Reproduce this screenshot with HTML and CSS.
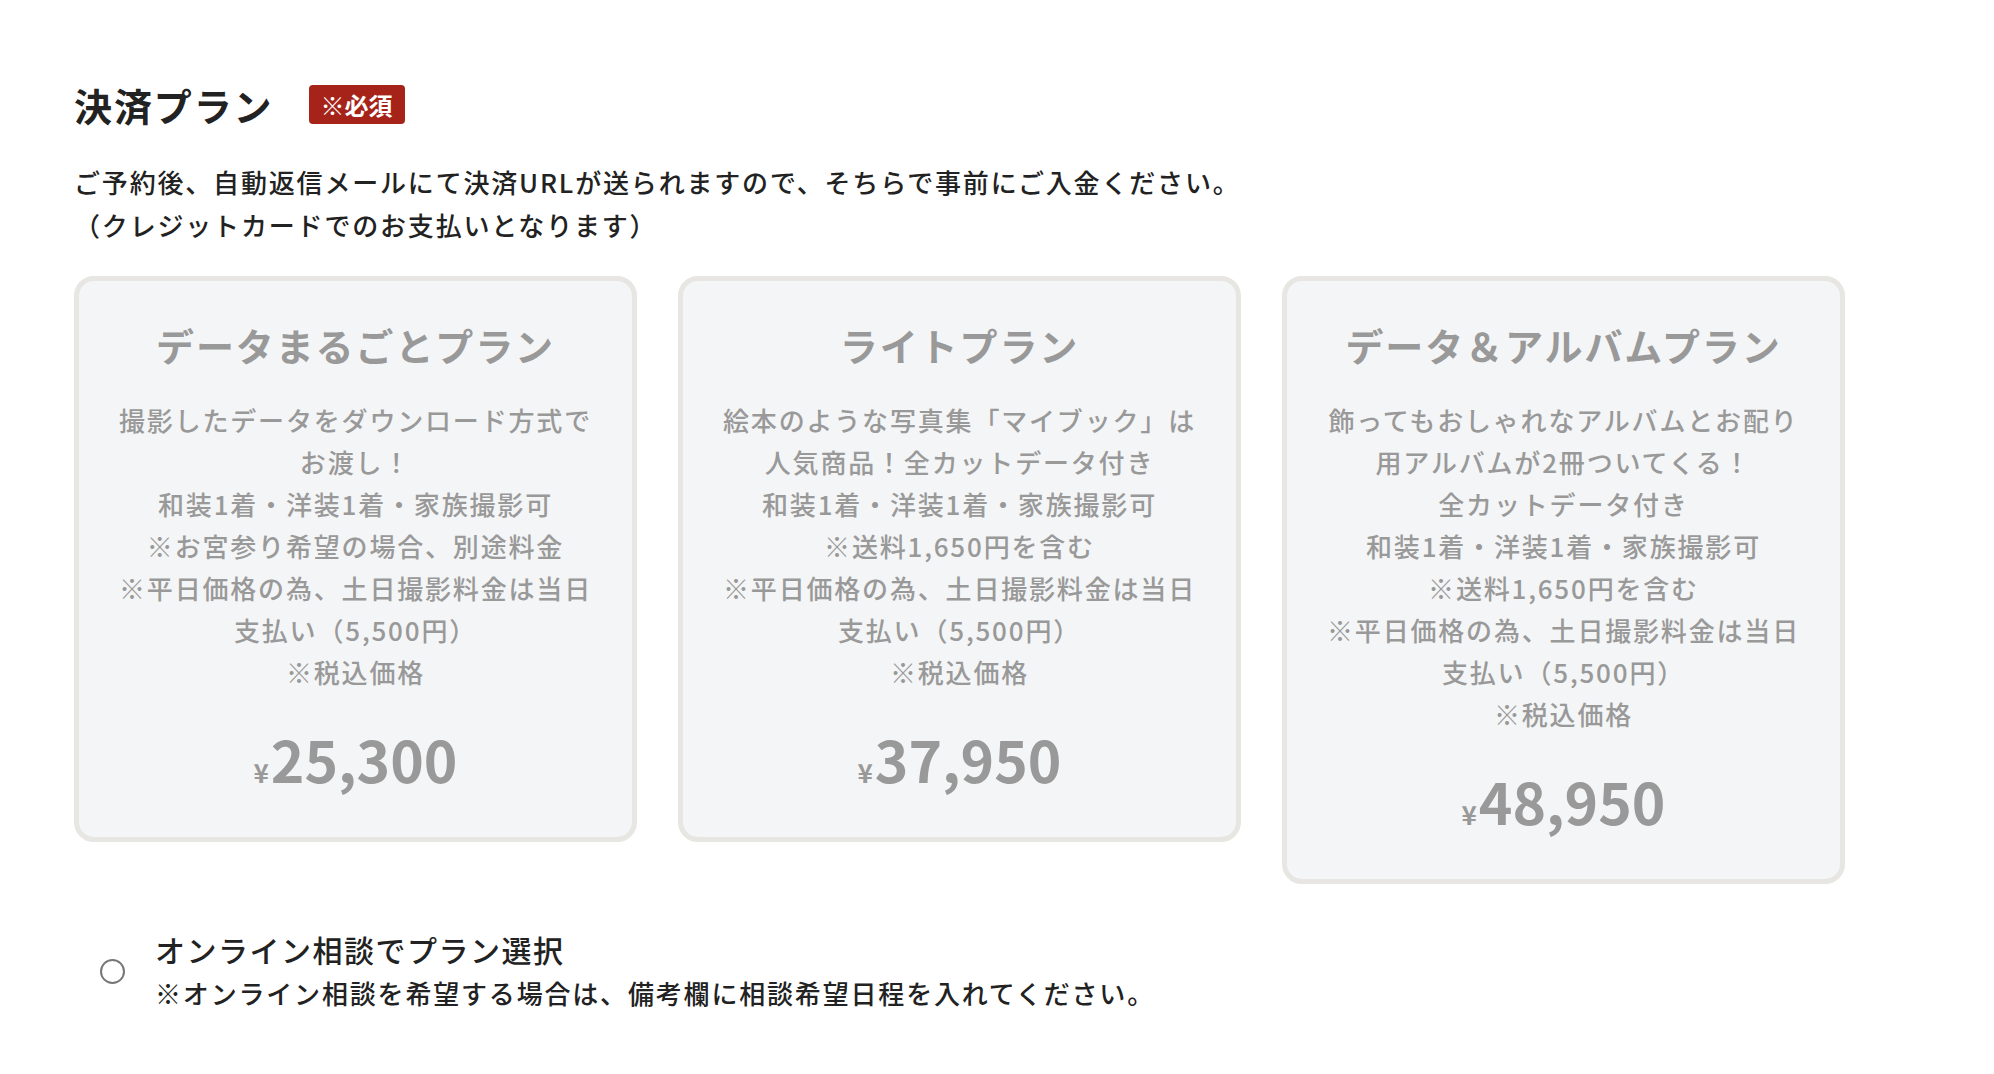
FILE: index.html
```html
<!DOCTYPE html>
<html lang="ja">
<head>
  <meta charset="UTF-8">
  <title>決済プラン</title>
  <link rel="stylesheet" href="styles.css">
</head>
<body>
  <section class="plan-section">
    <div class="section-head">
      <h2>決済プラン</h2>
      <span class="required">※必須</span>
    </div>
    <p class="lead">ご予約後、自動返信メールにて決済URLが送られますので、そちらで事前にご入金ください。<br>（クレジットカードでのお支払いとなります）</p>

    <div class="plans">
      <div class="plan-card">
        <h3>データまるごとプラン</h3>
        <p class="plan-desc">撮影したデータをダウンロード方式でお渡し！<br>和装1着・洋装1着・家族撮影可<br>※お宮参り希望の場合、別途料金<br>※平日価格の為、土日撮影料金は当日支払い（5,500円）<br>※税込価格</p>
        <p class="price"><span class="yen">¥</span>25,300</p>
      </div>
      <div class="plan-card">
        <h3>ライトプラン</h3>
        <p class="plan-desc">絵本のような写真集「マイブック」は人気商品！全カットデータ付き<br>和装1着・洋装1着・家族撮影可<br>※送料1,650円を含む<br>※平日価格の為、土日撮影料金は当日支払い（5,500円）<br>※税込価格</p>
        <p class="price"><span class="yen">¥</span>37,950</p>
      </div>
      <div class="plan-card">
        <h3>データ＆アルバムプラン</h3>
        <p class="plan-desc">飾ってもおしゃれなアルバムとお配り用アルバムが2冊ついてくる！<br>全カットデータ付き<br>和装1着・洋装1着・家族撮影可<br>※送料1,650円を含む<br>※平日価格の為、土日撮影料金は当日支払い（5,500円）<br>※税込価格</p>
        <p class="price"><span class="yen">¥</span>48,950</p>
      </div>
    </div>

    <label class="consult">
      <input type="radio" name="plan" value="online">
      <span class="consult-text">
        <span class="consult-title">オンライン相談でプラン選択</span>
        <span class="consult-note">※オンライン相談を希望する場合は、備考欄に相談希望日程を入れてください。</span>
      </span>
    </label>
  </section>
</body>
</html>
```

FILE: styles.css
```css
body {
  margin: 0;
  font-family: "Noto Sans CJK JP", "Noto Sans", sans-serif;
  background: #fff;
  color: #222;
}
.plan-section {
  padding: 78px 74px 60px;
}
.section-head {
  display: flex;
  align-items: center;
  gap: 35px;
}
.section-head h2 {
  margin: 0;
  font-size: 38px;
  line-height: 53px;
  font-weight: 700;
  letter-spacing: 0.05em;
}
.required {
  display: inline-block;
  background: #a52319;
  color: #fff;
  font-size: 24px;
  font-weight: 700;
  line-height: 39px;
  padding: 0 12px;
  border-radius: 4px;
}
.lead {
  margin: 29px 0 0;
  font-size: 26px;
  font-weight: 500;
  line-height: 43px;
  letter-spacing: 0.07em;
}
.plans {
  display: grid;
  grid-template-columns: repeat(3, 563px);
  gap: 41px;
  align-items: start;
  margin-top: 30px;
}
.plan-card {
  background: #f4f5f6;
  border: 5px solid #e8e6e2;
  border-radius: 20px;
  padding: 37px 36px 29px;
  text-align: center;
  color: #999;
}
.plan-card h3 {
  margin: 0;
  font-size: 38px;
  line-height: 54px;
  font-weight: 700;
  letter-spacing: 0.05em;
}
.plan-desc {
  margin: 27px 0 0;
  font-size: 26px;
  font-weight: 500;
  line-height: 42px;
  letter-spacing: 0.07em;
}
.price {
  margin: 29px 0 0;
  font-size: 57px;
  line-height: 72px;
  font-weight: 700;
}
.yen {
  font-size: 26px;
  margin-right: 2px;
}
.consult {
  display: flex;
  align-items: center;
  gap: 30px;
  margin: 43px 0 0 26px;
  cursor: pointer;
}
.consult input {
  appearance: none;
  width: 25px;
  height: 25px;
  margin: 0;
  border: 2px solid #777;
  border-radius: 50%;
  background: #fff;
}
.consult input:checked {
  background: radial-gradient(#555 40%, #fff 45%);
}
.consult-text {
  display: flex;
  flex-direction: column;
  font-size: 26px;
  font-weight: 500;
  line-height: 44px;
  letter-spacing: 0.07em;
}
.consult-title {
  font-size: 30px;
  letter-spacing: 0.05em;
}
```
